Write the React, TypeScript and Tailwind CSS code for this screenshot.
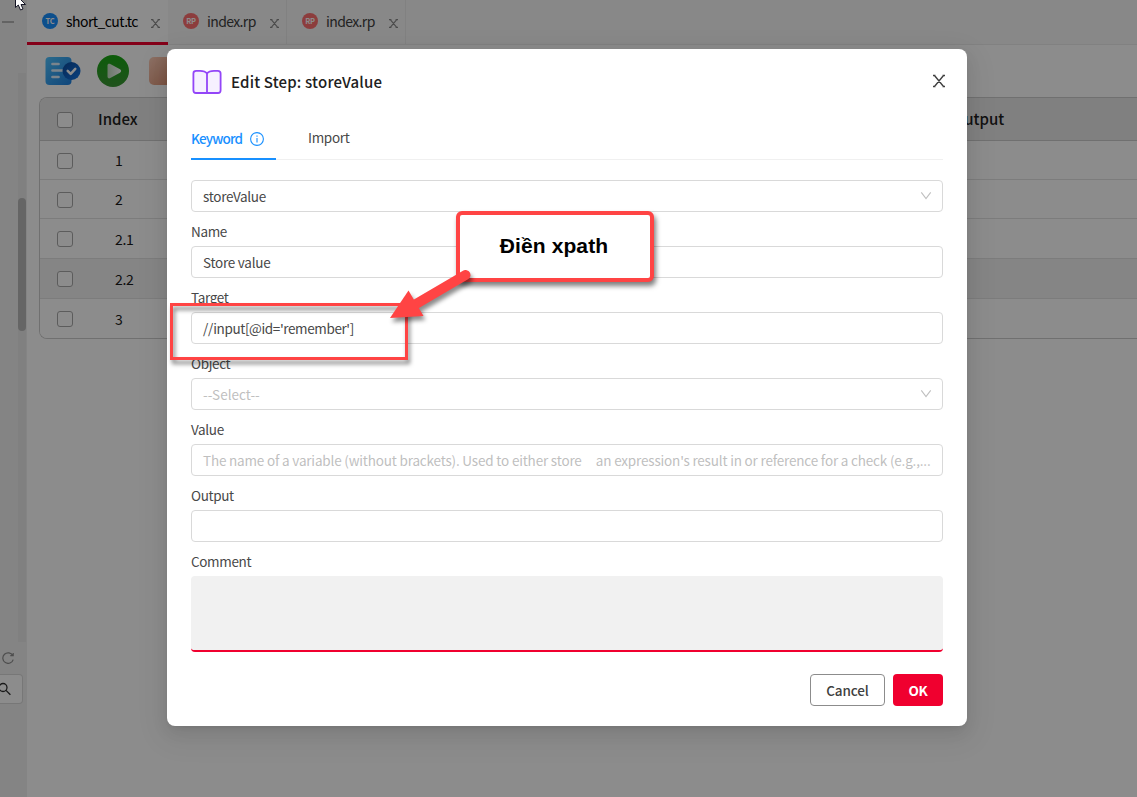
import React from 'react';

const uiFont = "font-['Noto_Sans_CJK_SC','Noto_Sans',sans-serif]";

function TabClose() {
  return (
    <svg width="9" height="9" viewBox="0 0 9 9" fill="none" stroke="#8a8a8a" strokeWidth="1.1">
      <path d="M1.3.6 7.7 8.4M7.700.6 1.300 8.400M0 .6h2.400M6.600.6H9M0 8.400h2.400M6.600 8.400H9" />
    </svg>
  );
}

function FileTab({ kind, name, active }: { kind: 'TC' | 'RP'; name: string; active?: boolean }) {
  return (
    <div
      className={
        active
          ? 'flex h-[45px] w-[141px] items-center border-b-[3px] border-[#f0002f] bg-white pl-[15px] pr-2'
          : 'flex h-[45px] w-[119px] items-center border-b border-r border-[#ececec] bg-[#f7f7f7] pb-[2px] pl-[15px] pr-[7px]'
      }
    >
      <span
        className={
          'flex size-4 shrink-0 items-center justify-center rounded-full text-[7.5px] font-bold leading-4 tracking-[-0.2px] text-white ' +
          (kind === 'TC' ? 'bg-[#1890ff]' : 'bg-[#ff7070]')
        }
      >
        {kind}
      </span>
      <span
        className={
          'ml-2 whitespace-nowrap text-sm leading-5 ' +
          (active ? 'tracking-[-0.55px] text-black' : 'tracking-[-0.6px] text-[#404040]')
        }
      >
        {name}
      </span>
      <span className="ml-auto pt-[5px]">
        <TabClose />
      </span>
    </div>
  );
}

function CheckBox() {
  return <span className="size-4 shrink-0 rounded-[3px] border border-[#a8a8a8] bg-white" />;
}

function TableRow({ index, tall, shaded, last }: { index: string; tall?: boolean; shaded?: boolean; last?: boolean }) {
  return (
    <div
      className={
        'flex items-center pl-[17px] ' +
        (tall ? 'h-10 ' : 'h-[39px] pt-[2px] ') +
        (shaded ? 'bg-[#f2f2f2] ' : 'bg-white ') +
        (last ? '' : 'border-b border-[#e2e2e2]')
      }
    >
      <CheckBox />
      <span className={'ml-[42px] text-sm leading-5 tracking-[-0.3px] text-[#1a1a1a] ' + (tall ? '' : 'pb-[2px]')}>{index}</span>
    </div>
  );
}

function Chevron() {
  return (
    <svg width="12" height="12" viewBox="0 0 12 12" fill="none" stroke="#bfbfbf" strokeWidth="1.1" className="mb-px">
      <path d="M1.3 2.3 6 8.6l4.7-6.3" />
    </svg>
  );
}

const labelStyle = 'h-[34px] pt-[8px] text-[13.5px] leading-[22px] tracking-[-0.35px] text-[#484848]';

function Field({
  label,
  value,
  placeholder,
  select,
  tracking = 'tracking-[-0.25px]',
}: {
  label?: string;
  value?: string;
  placeholder?: string;
  select?: boolean;
  tracking?: string;
}) {
  return (
    <div>
      {label && <div className={labelStyle}>{label}</div>}
      <div className="flex h-8 items-center justify-between rounded-[4px] border border-[#d9d9d9] bg-white pl-[11px] pr-[10px]">
        <span className={'whitespace-pre text-[13.5px] leading-5 ' + tracking + (placeholder ? ' text-[#bfbfbf]' : ' text-[#484848]')}>
          {value ?? placeholder}
        </span>
        {select && <Chevron />}
      </div>
    </div>
  );
}

function SidePanel() {
  return (
    <aside className="flex w-[27px] shrink-0 flex-col bg-[#f0f0f0]">
      <div className="h-[73px] pl-[2px] pt-[21px]">
        <div className="h-[2px] w-3 bg-[#b5b5b5]" />
      </div>
      <div className="ml-[18px] h-[569px] w-2 bg-[#e9e9e9] pt-[125px]">
        <div className="h-[133px] rounded-full bg-[#b9b9b9]" />
      </div>
      <div className="flex h-8 items-center pl-[2px]">
        <svg width="12" height="12" viewBox="0 0 12 12" fill="none" stroke="#8c8c8c" strokeWidth="1.2">
          <path d="M11.2 7.6A5.3 5.3 0 1 1 10.8 3.6M8.3 3.7h2.9V.9" />
        </svg>
      </div>
      <div className="flex h-[30px] w-[23px] items-center overflow-hidden rounded-r-[4px] border border-l-0 border-[#d9d9d9] bg-white">
        <svg width="12" height="14" viewBox="0 0 12 14" fill="none" stroke="#303030" strokeWidth="1.3">
          <circle cx="3" cy="5.5" r="4" />
          <path d="m6 8.4 4.4 4.4" />
        </svg>
      </div>
    </aside>
  );
}

function Toolbar() {
  return (
    <div className="flex h-[52px] items-center pl-[18px]">
      <svg width="36" height="30" viewBox="0 0 36 30" className="shrink-0">
        <defs>
          <linearGradient id="doc" x1="0" y1="0" x2="1" y2="1">
            <stop stopColor="#4fc3ff" />
            <stop offset="1" stopColor="#1d7fe0" />
          </linearGradient>
          <linearGradient id="tick" x1="0" y1="0" x2="1" y2="1">
            <stop stopColor="#0a4a9c" />
            <stop offset="1" stopColor="#1478e8" />
          </linearGradient>
        </defs>
        <rect x="0.5" y="1" width="26" height="28" rx="4" fill="url(#doc)" />
        <path d="M7.500 8h6M7.500 14.500h10M7.500 21h6" stroke="#dff1ff" strokeWidth="2.700" strokeLinecap="round" />
        <circle cx="26.500" cy="15" r="9" fill="url(#tick)" />
        <path d="m22.700 14.800 3 3 4.600-5" fill="none" stroke="#fff" strokeWidth="2.500" strokeLinecap="round" strokeLinejoin="round" />
      </svg>
      <svg width="32" height="32" viewBox="0 0 32 32" className="ml-4 shrink-0">
        <defs>
          <linearGradient id="run" x1="0" y1="0" x2="0" y2="1">
            <stop stopColor="#18a812" />
            <stop offset="1" stopColor="#3c9636" />
          </linearGradient>
          <linearGradient id="play" x1="0" y1="0" x2="1" y2="0">
            <stop stopColor="#c2dcc0" />
            <stop offset="1" stopColor="#fff" />
          </linearGradient>
        </defs>
        <circle cx="16" cy="16" r="16" fill="url(#run)" />
        <path d="M10.500 10.500c0-1.700 1.400-2.200 2.800-1.500l9.700 5.300c1.500.9 1.500 2.500 0 3.400l-9.700 5.400c-1.400.7-2.800.2-2.800-1.500z" fill="url(#play)" />
      </svg>
      <div className="ml-5 h-7 w-7 rounded-[5px] bg-linear-to-br from-[#ffcdb8] to-[#d88c6c]" />
    </div>
  );
}

function StepTable() {
  return (
    <div className="ml-3 h-[242px] overflow-hidden rounded-l-[8px] border border-r-0 border-[#cccccc]">
      <div className="flex h-[43px] items-center border-b border-[#cccccc] bg-[#e9e9e9] pl-[17px] pt-px text-[15px] font-medium leading-6 text-[#202020]">
        <CheckBox />
        <span className="ml-[25px] w-[855px] pb-[2px]">Index</span>
        <span className="pb-[2px]">Output</span>
      </div>
      <TableRow index="1" />
      <TableRow index="2" />
      <TableRow index="2.1" tall />
      <TableRow index="2.2" tall shaded />
      <TableRow index="3" tall last />
    </div>
  );
}

function EditDialog() {
  return (
    <section className="flex h-[677px] w-[800px] flex-col rounded-[8px] bg-white px-6 shadow-[0_3px_6px_-4px_rgba(0,0,0,0.12),0_6px_16px_rgba(0,0,0,0.08),0_9px_28px_8px_rgba(0,0,0,0.05)]">
      <header className="flex h-[65px] items-center">
        <svg width="30" height="26" viewBox="0 0 30 26" fill="#f6f0ff" stroke="#9345f8" strokeWidth="1.8" strokeLinejoin="round" className="ml-px">
          <path d="M15 4.400C13.200 2 11 1.800 8 1.800H4.200Q1.400 1.800 1.400 4.400V21.200Q1.400 24 4 24H26Q28.600 24 28.600 21.200V4.400Q28.600 1.800 25.800 1.800H22C19 1.800 16.800 2 15 4.400Z" />
          <path d="M15 4.400V24" />
        </svg>
        <h1 className="ml-[9px] text-[15px] font-medium leading-6 tracking-[0.18px] text-[#202020]">Edit Step: storeValue</h1>
        <svg width="14" height="14" viewBox="0 0 14 14" fill="none" stroke="#404040" strokeWidth="1.4" className="mb-[2px] ml-auto mr-[-3px]">
          <path d="M2.500 1.500 11.500 12.500M11.500 1.500 2.500 12.500M1 1.500h2.500M10.500 1.500H13M1 12.500h2.500M10.500 12.500H13" />
        </svg>
      </header>
      <nav className="mb-5 flex h-[46px] border-b border-[#f0f0f0] text-[13.5px] leading-5">
        <div className="flex h-[46px] w-[85px] items-center border-b-2 border-[#1890ff] pt-[4px] font-medium text-[#1890ff]">
          <span className="w-[51px] pb-px tracking-[-0.85px]">Keyword</span>
          <svg width="14" height="14" viewBox="0 0 14 14" fill="none" stroke="#1890ff" strokeWidth="1.1" className="ml-2 mt-px">
            <circle cx="7" cy="7" r="6.400" />
            <path d="M7 3.500v1.300M7 6v4.500" />
          </svg>
        </div>
        <div className="ml-8 flex items-center pt-px tracking-[-0.3px] text-[#484848]">Import</div>
      </nav>
      <Field value="storeValue" select tracking="tracking-[-0.3px]" />
      <Field label="Name" value="Store value" />
      <Field label="Target" value="//input[@id='remember']" tracking="tracking-[-0.38px]" />
      <Field label="Object" placeholder="--Select--" select tracking="tracking-[0px]" />
      <Field
        label="Value"
        placeholder={"The name of a variable (without brackets). Used to either store     an expression's result in or reference for a check (e.g.,..."}
        tracking="tracking-[-0.18px]"
      />
      <Field label="Output" />
      <div className={labelStyle}>Comment</div>
      <div className="h-[76px] rounded-[4px] border-b-2 border-[#f0002f] bg-[#f1f1f1]" />
      <footer className="mt-[22px] flex justify-end gap-2 text-[13.5px]">
        <button className="h-8 w-[75px] rounded-[4px] border border-[#8c8c8c] font-medium tracking-[-0.1px] text-[#404040]">Cancel</button>
        <button className="h-8 w-[50px] rounded-[4px] bg-[#f0002f] font-bold tracking-[-0.3px] text-white">OK</button>
      </footer>
    </section>
  );
}

function Annotations() {
  return (
    <>
      <div className="absolute left-[170px] top-[303px] h-[57px] w-[238px] border-[3px] border-[#ff4444] drop-shadow-[2px_4px_2px_rgba(0,0,0,0.5)]" />
      <div className="absolute left-[456px] top-[211px] flex h-[71px] w-[198px] items-center justify-center rounded-[6px] border-4 border-[#ff4444] bg-white pb-[2px] pr-[2px] font-['Liberation_Sans',sans-serif] text-[21px] font-bold tracking-[0.1px] text-black shadow-[2px_4px_5px_rgba(0,0,0,0.5)]">
        Điền xpath
      </div>
      <svg className="absolute left-[380px] top-[260px] drop-shadow-[2px_4px_2px_rgba(0,0,0,0.45)]" width="100" height="70" viewBox="0 0 100 70">
        <path d="M85.500 15 36 44" stroke="#ff4444" strokeWidth="10" strokeLinecap="round" />
        <path d="M10 58 28.500 30.500 43.500 56Z" fill="#ff4444" />
      </svg>
    </>
  );
}

export default function App() {
  return (
    <div className={'relative flex h-[797px] w-[1137px] overflow-hidden bg-white ' + uiFont}>
      <SidePanel />
      <main className="min-w-0 flex-1 overflow-hidden">
        <div className="flex h-[45px] border-b border-[#ececec] bg-[#f7f7f7]">
          <FileTab kind="TC" name="short_cut.tc" active />
          <FileTab kind="RP" name="index.rp" />
          <FileTab kind="RP" name="index.rp" />
        </div>
        <Toolbar />
        <StepTable />
      </main>
      <div className="absolute inset-0 flex items-start bg-black/45 pl-[167px] pt-[49px]">
        <EditDialog />
      </div>
      <Annotations />
      <svg className="absolute left-[14px] top-0" width="14" height="12" viewBox="0 0 14 12">
        <path d="M1.500-4V7.500L4.300 5 6.500 10 9 9 7 4.500H11.500L3-4Z" fill="#fff" stroke="#151525" strokeWidth="1" />
      </svg>
    </div>
  );
}
